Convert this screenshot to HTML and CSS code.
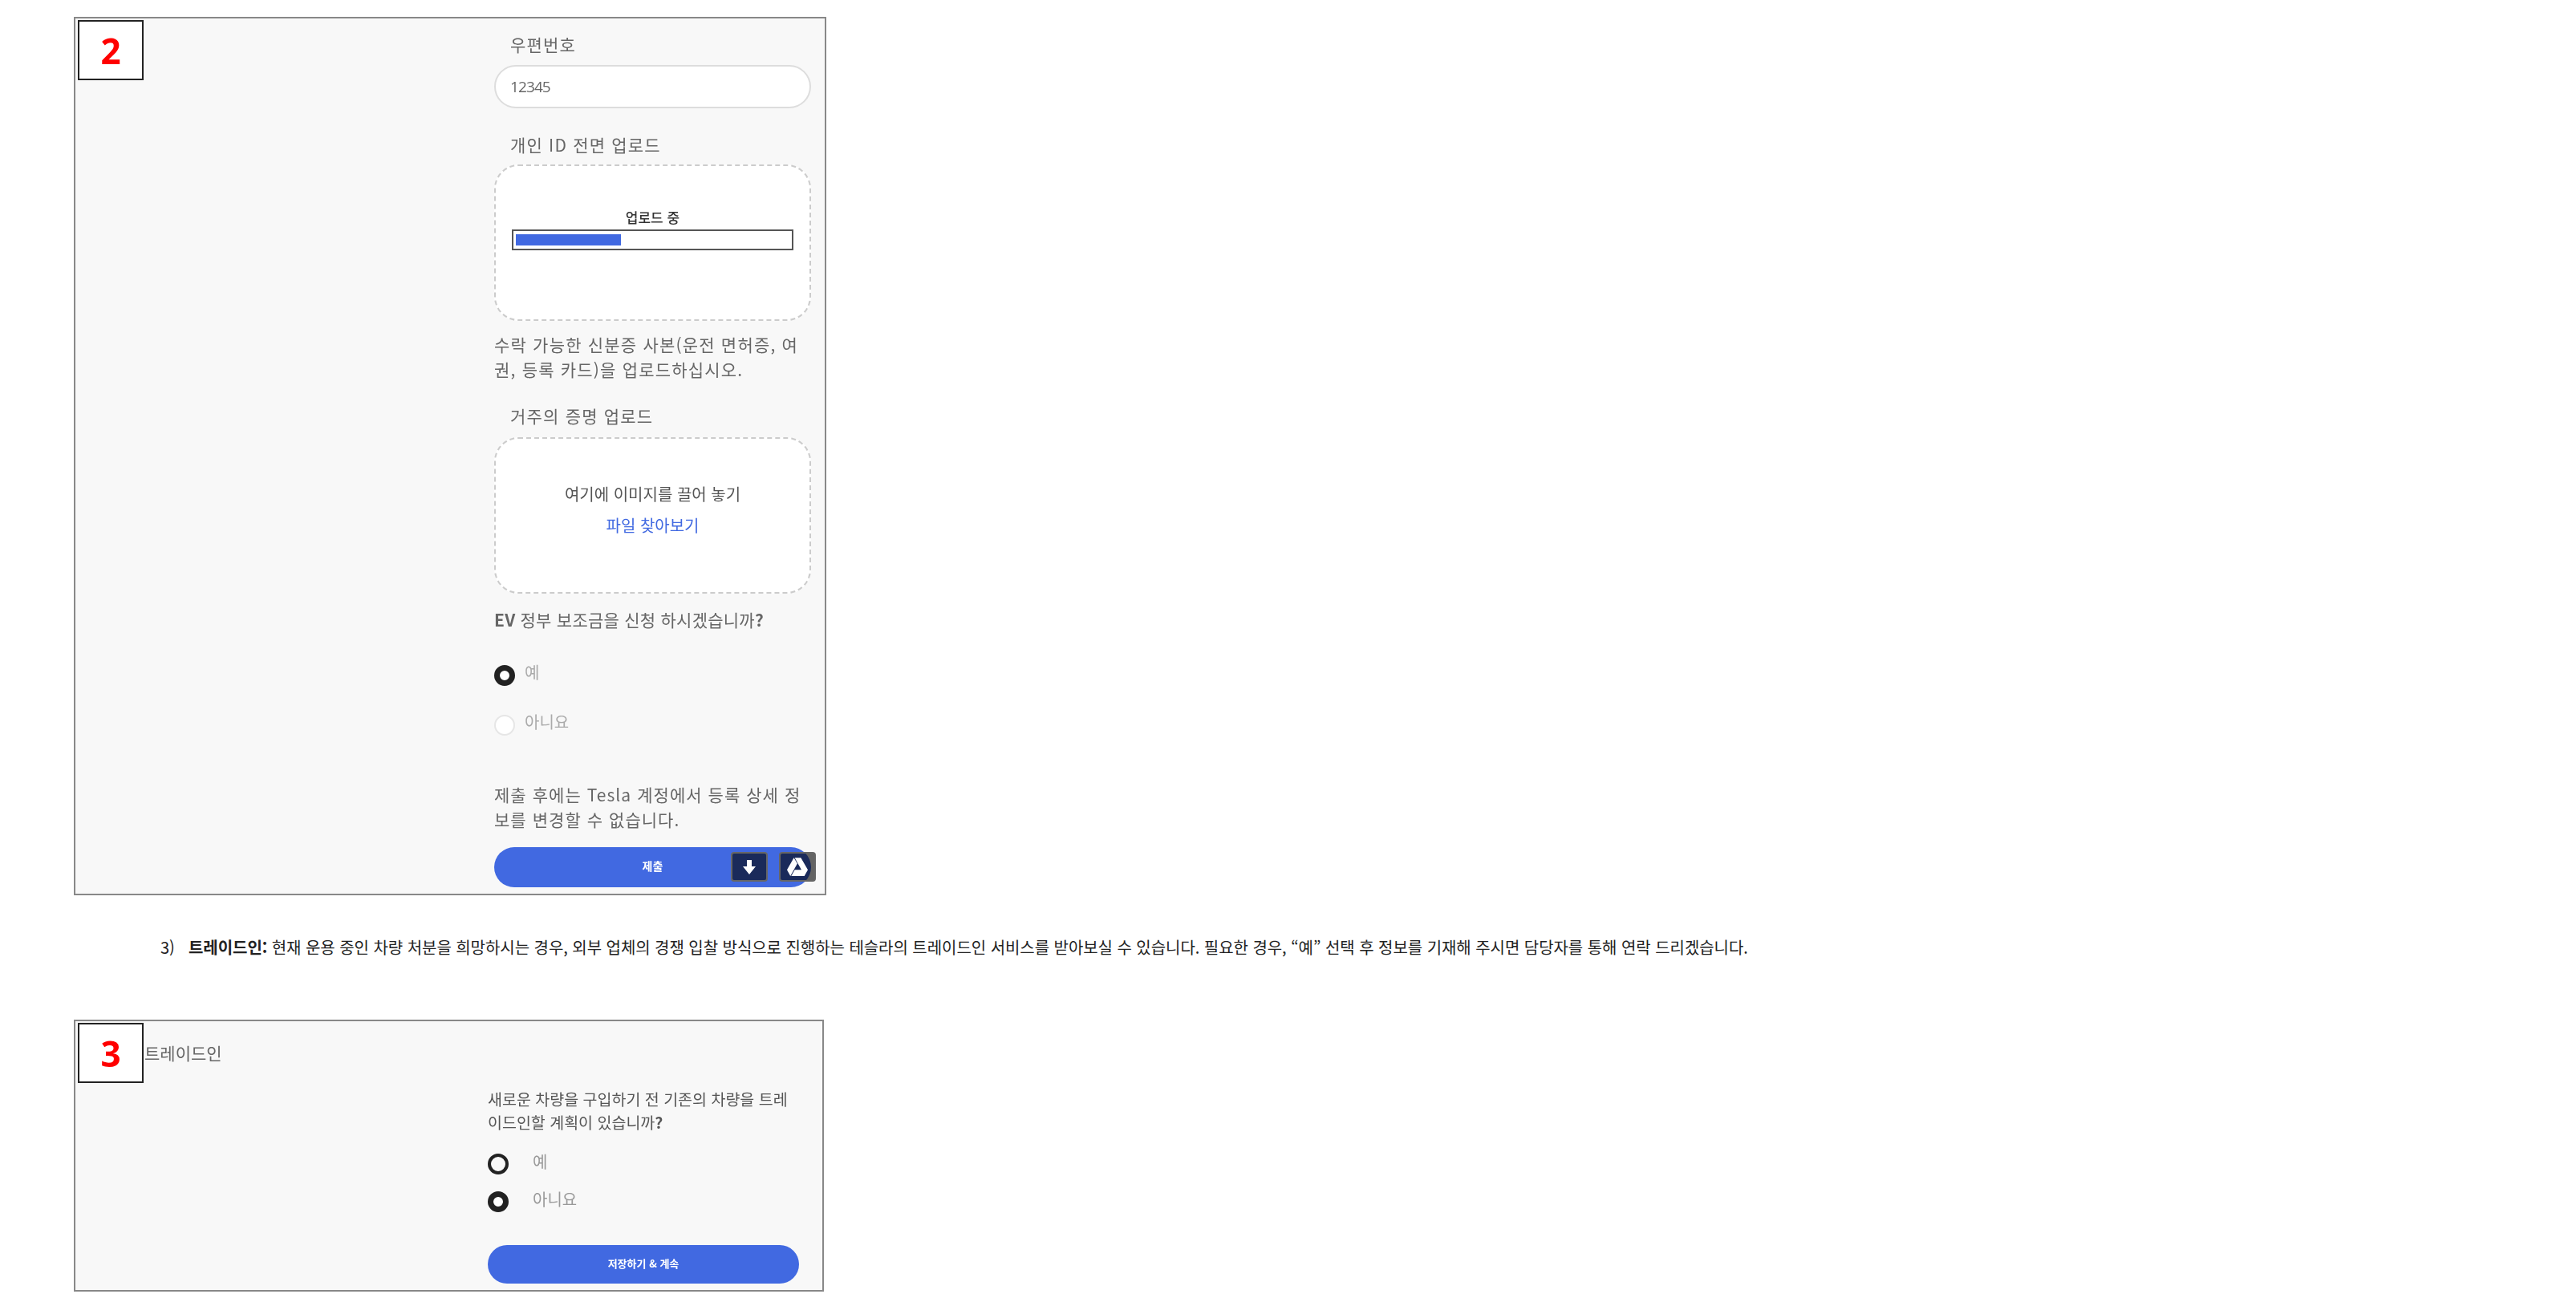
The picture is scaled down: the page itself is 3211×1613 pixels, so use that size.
FILE: index.html
```html
<!DOCTYPE html>
<html lang="ko">
<head>
<meta charset="utf-8">
<title>트레이드인</title>
<link rel="stylesheet" href="styles.css">
</head>
<body>
<section class="panel panel-two">
  <div class="badge"><span>2</span></div>
  <form class="form">
    <div class="label label-first">우편번호</div>
    <div class="input">12345</div>
    <div class="label label-next">개인 ID 전면 업로드</div>
    <div class="drop drop-id">
      <div class="upload-title">업로드 중</div>
      <div class="progress"><div class="progress-fill"></div></div>
    </div>
    <p class="help help-id">수락 가능한 신분증 사본(운전 면허증, 여<br>권, 등록 카드)을 업로드하십시오.</p>
    <div class="label label-proof">거주의 증명 업로드</div>
    <div class="drop">
      <div class="drop-text">여기에 이미지를 끌어 놓기</div>
      <div class="drop-link">파일 찾아보기</div>
    </div>
    <div class="question"><b>EV</b> 정부 보조금을 신청 하시겠습니까<b>?</b></div>
    <div class="radio-row radio-yes"><span class="radio radio-on"></span><span class="radio-text">예</span></div>
    <div class="radio-row radio-no"><span class="radio radio-idle"></span><span class="radio-text">아니요</span></div>
    <p class="help help-submit">제출 후에는 Tesla 계정에서 등록 상세 정<br>보를 변경할 수 없습니다.</p>
    <div class="submit">제출</div>
    <div class="tools">
      <div class="tool"><svg width="16" height="18" viewBox="0 0 16 18"><path d="M5 0h6v8h5l-8 10L0 8h5z" fill="#fff"/></svg></div>
      <div class="tool"><svg width="26" height="23" viewBox="0 0 24 21"><path d="M7.900 0l4 6.900L3.900 21 0 14zM8.900 0H16l8 14h-7.400zM4.900 21l4-7H24l-4 7z" fill="#fff"/></svg></div>
    </div>
  </form>
</section>

<p class="note"><span class="note-num">3)</span><span><b>트레이드인:</b> 현재 운용 중인 차량 처분을 희망하시는 경우, 외부 업체의 경쟁 입찰 방식으로 진행하는 테슬라의 트레이드인 서비스를 받아보실 수 있습니다. 필요한 경우, “예” 선택 후 정보를 기재해 주시면 담당자를 통해 연락 드리겠습니다.</span></p>

<section class="panel panel-three">
  <div class="badge"><span>3</span></div>
  <div class="trade-title">트레이드인</div>
  <div class="form form-three">
    <p class="trade-q">새로운 차량을 구입하기 전 기존의 차량을 트레<br>이드인할 계획이 있습니까<b>?</b></p>
    <div class="radio-row trade-yes"><span class="radio radio-thin"></span><span class="radio-text trade-text">예</span></div>
    <div class="radio-row trade-no"><span class="radio radio-on"></span><span class="radio-text trade-text">아니요</span></div>
    <div class="submit submit-three">저장하기 &amp; 계속</div>
  </div>
</section>
</body>
</html>
```
FILE: styles.css
```css
* { box-sizing: border-box; }
html, body { margin: 0; padding: 0; background: #fff; }
body {
  width: 3211px;
  height: 1613px;
  overflow: hidden;
  padding: 21px 0 0 92px;
  font-family: "Noto Sans CJK KR", "Noto Sans", sans-serif;
  color: #555;
}
p { margin: 0; }

.panel {
  position: relative;
  background: #f8f8f8;
  border: 2px solid #888;
  filter: blur(0.6px);
}
.panel-two { width: 938px; height: 1095px; padding: 19px 0 0 522px; }
.panel-three { width: 935px; height: 339px; margin-top: 76px; padding: 0 0 0 514px; }

.badge {
  position: absolute;
  left: 3px;
  top: 2px;
  width: 82px;
  height: 75px;
  background: #fff;
  border: 2px solid #222;
  display: flex;
  align-items: center;
  justify-content: center;
  color: #f00;
  font: 700 44px/1 "Open Sans", sans-serif;
}

.form { position: relative; width: 395px; }

.label {
  height: 30px;
  line-height: 27px;
  padding-left: 20px;
  font-size: 21px;
  letter-spacing: 1.2px;
  color: #666;
}
.label-next { margin-top: 32px; }
.label-proof { margin-top: 29px; }

.input {
  height: 54px;
  margin-top: 9px;
  padding-left: 18px;
  background: #fff;
  border: 2px solid #ddd;
  border-radius: 27px;
  font: 19px/50px "Open Sans", sans-serif;
  letter-spacing: -0.9px;
  color: #666;
}

.drop {
  height: 195px;
  margin-top: 10px;
  padding: 0 22px;
  background: #fff;
  border: 2px dashed #ccc;
  border-radius: 30px;
  display: flex;
  flex-direction: column;
  align-items: center;
  justify-content: center;
}
.drop-id { margin-top: 8px; }
.upload-title {
  height: 24px;
  line-height: 24px;
  margin-top: -34px;
  font-size: 17px;
  font-weight: 500;
  color: #333;
}
.progress {
  width: 351px;
  height: 26px;
  margin-top: 3px;
  padding: 4px 3px;
  background: #fff;
  border: 2px solid #555;
}
.progress-fill { width: 131px; height: 14px; background: #4169e1; }

.drop-text { height: 28px; line-height: 28px; margin-top: -14px; font-size: 20px; color: #555; }
.drop-link { height: 28px; line-height: 28px; margin-top: 11px; font-size: 20px; color: #4169e1; }

.help { font-size: 21px; line-height: 31px; letter-spacing: 1.2px; color: #666; }
.help-id { margin-top: 14px; }
.help-submit { margin-top: 57px; letter-spacing: 1.05px; }

.question { margin-top: 19px; height: 30px; line-height: 27px; font-size: 21px; letter-spacing: 0.25px; color: #666; }

.radio-row { display: flex; gap: 12px; height: 27px; }
.radio-yes { margin-top: 40px; }
.radio-no { margin-top: 35px; }
.radio { width: 26px; height: 26px; border-radius: 50%; flex: none; }
.radio-on { background: #fff; border: 7px solid #222; }
.radio-idle { background: #fff; border: 2px solid #e6e6e6; }
.radio-thin { background: #f8f8f8; border: 4px solid #222; }
.radio-text { font-size: 20px; line-height: 17px; color: #aaa; }

.submit {
  height: 50px;
  margin-top: 19px;
  line-height: 46px;
  text-align: center;
  background: #4169e1;
  border-radius: 25px;
  color: #fff;
  font-size: 14px;
  font-weight: 700;
}

.tools {
  position: absolute;
  right: -6px;
  bottom: 7px;
  display: flex;
  gap: 14px;
}
.tool {
  width: 46px;
  height: 37px;
  display: flex;
  align-items: center;
  justify-content: center;
  background: rgba(0, 0, 0, 0.6);
  border: 2px solid #666;
  border-radius: 4px;
}

.note {
  display: flex;
  height: 28px;
  margin: 51px 0 0 108px;
  line-height: 28px;
  font-size: 20px;
  letter-spacing: -0.055px;
  color: #222;
  white-space: nowrap;
}
.note-num { width: 35px; flex: none; }

.trade-title {
  position: absolute;
  left: 86px;
  top: 24px;
  line-height: 30px;
  font-size: 21px;
  color: #666;
}
.form-three { width: 388px; padding-top: 82px; }
.trade-q { font-size: 19.500px; line-height: 29px; color: #555; }
.trade-yes { margin-top: 25px; }
.trade-no { margin-top: 20px; }
.trade-yes, .trade-no { gap: 30px; }
.trade-text { color: #999; line-height: 20px; }
.submit-three { height: 48px; margin-top: 40px; line-height: 46px; border-radius: 24px; font-size: 13px; }
```
